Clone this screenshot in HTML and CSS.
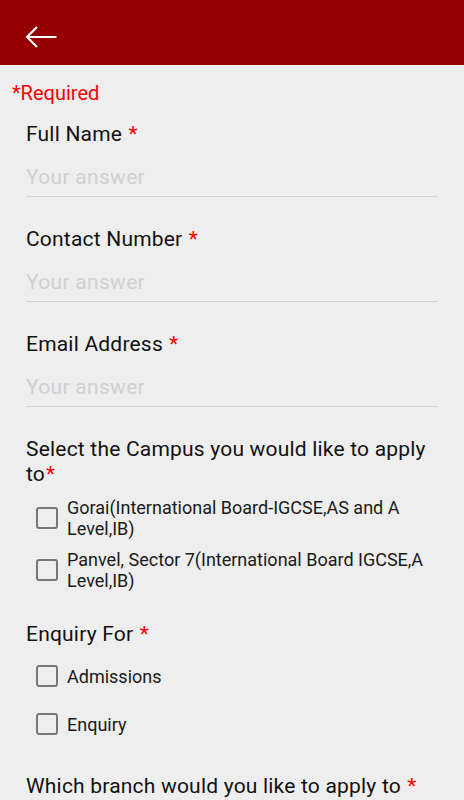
FILE: index.html
```html
<!DOCTYPE html>
<html lang="en">
<head>
    <meta charset="UTF-8">
    <meta name="viewport" content="width=device-width, initial-scale=1.0">
    <title>Admission Enquiry</title>
    <link rel="stylesheet" href="styles.css">
</head>
<body>
    <header class="toolbar">
        <svg class="back" width="32" height="22" viewBox="0 0 32 22">
            <path d="M31.5 11 H2 M12 1 L2 11 L12 21" fill="none" stroke="#fff" stroke-width="2.2"/>
        </svg>
    </header>

    <p class="required">*Required</p>

    <form class="form">
        <div class="question">
            <label class="label">Full Name <span class="star">*</span></label>
            <input class="answer" type="text" placeholder="Your answer">
        </div>

        <div class="question">
            <label class="label">Contact Number <span class="star">*</span></label>
            <input class="answer" type="text" placeholder="Your answer">
        </div>

        <div class="question">
            <label class="label">Email Address <span class="star">*</span></label>
            <input class="answer" type="text" placeholder="Your answer">
        </div>

        <div class="question">
            <label class="label">Select the Campus you would like to apply to<span class="star">*</span></label>
            <div class="options">
                <label class="option"><span class="box"></span><span>Gorai(International Board-IGCSE,AS and A Level,IB)</span></label>
                <label class="option"><span class="box"></span><span>Panvel, Sector 7(International Board IGCSE,A Level,IB)</span></label>
            </div>
        </div>

        <div class="question">
            <label class="label">Enquiry For <span class="star">*</span></label>
            <div class="options">
                <label class="option"><span class="box"></span><span>Admissions</span></label>
                <label class="option"><span class="box"></span><span>Enquiry</span></label>
            </div>
        </div>

        <div class="question">
            <label class="label">Which branch would you like to apply to <span class="star">*</span></label>
        </div>
    </form>
</body>
</html>
```

FILE: styles.css
```css
body {
    font-family: Roboto, "Noto Sans", sans-serif;
    background-color: #eeeeee;
    margin: 0;
    padding: 0;
    overflow: hidden;
}

.toolbar {
    height: 65px;
    box-sizing: border-box;
    padding: 26px 0 0 25px;
    background-color: #960000;
}

.back {
    display: block;
}

.required {
    margin: 16px 0 0 12px;
    font-size: 20px;
    line-height: 24px;
    color: #ff0000;
}

.form {
    padding: 17px 26px 0 26px;
}

.question + .question {
    margin-top: 30px;
}

.label {
    display: block;
    font-size: 21px;
    line-height: 25px;
    letter-spacing: 0.2px;
    color: #111;
}

.star {
    color: #ff0000;
    padding-left: 1px;
}

.answer {
    display: block;
    width: 100%;
    box-sizing: border-box;
    margin: 0;
    padding: 18px 0 7px 0;
    font-family: inherit;
    font-size: 21px;
    line-height: 24px;
    letter-spacing: 0.3px;
    background: transparent;
    border: none;
    border-bottom: 1px solid #d2d2d2;
    outline: none;
}

.answer::placeholder {
    color: #d0d0d0;
}

.options {
    margin-top: 5px;
    margin-bottom: -4px;
    padding-left: 10px;
}

.option {
    display: flex;
    align-items: center;
    min-height: 48px;
    box-sizing: border-box;
    padding: 5px 0;
    font-size: 18px;
    line-height: 21px;
    color: #1a1a1a;
}

.box {
    flex: none;
    width: 22px;
    height: 22px;
    box-sizing: border-box;
    margin-right: 9px;
    border: 2px solid #777;
    border-radius: 3px;
}
```
